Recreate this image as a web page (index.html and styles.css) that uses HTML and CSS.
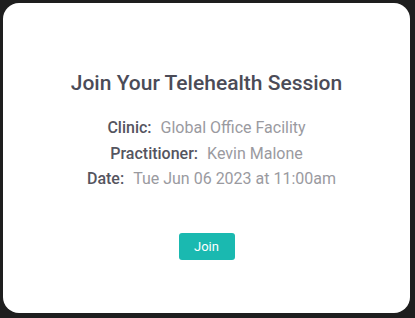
FILE: index.html
```html
<!DOCTYPE html>
<html lang="en">
<head>
  <meta charset="UTF-8">
  <meta name="viewport" content="width=device-width, initial-scale=1.0">
  <title>Join Your Telehealth Session</title>
  <link rel="stylesheet" href="styles.css">
</head>
<body>
  <div class="card">
    <h2 class="title">Join Your Telehealth Session</h2>
    <div class="details">
      <div class="row"><span class="label">Clinic:</span><span class="value">Global Office Facility</span></div>
      <div class="row"><span class="label">Practitioner:</span><span class="value">Kevin Malone</span></div>
      <div class="row row-date"><span class="label">Date:</span><span class="value">Tue Jun 06 2023 at 11:00am</span></div>
    </div>
    <button class="join-btn">Join</button>
  </div>
</body>
</html>
```

FILE: styles.css
```css
* { margin: 0; padding: 0; box-sizing: border-box; }
body {
  height: 100vh;
  background: #1e1e1e;
  font-family: Roboto, "Noto Sans", sans-serif;
  overflow: hidden;
  padding: 3px 5px 5px 3px;
}
.card {
  background: #fff;
  border-radius: 16px;
  height: 310px;
  display: flex;
  flex-direction: column;
  align-items: center;
  padding-top: 68px;
}
.title {
  font-size: 21px;
  font-weight: 500;
  color: #4b4b57;
  line-height: 25px;
}
.details {
  margin-top: 19px;
  display: flex;
  flex-direction: column;
  align-items: center;
}
.row {
  font-size: 16px;
  line-height: 25.5px;
}
.row-date { padding-left: 10px; }
.label {
  font-weight: 500;
  color: #55555f;
}
.value {
  color: #9a9a9f;
  margin-left: 9px;
}
.join-btn {
  margin-top: 41px;
  width: 56px;
  height: 27px;
  border: none;
  border-radius: 3px;
  background: #1ab9b0;
  color: #fff;
  font-family: inherit;
  font-size: 13px;
  font-weight: 400;
  cursor: pointer;
}
```
